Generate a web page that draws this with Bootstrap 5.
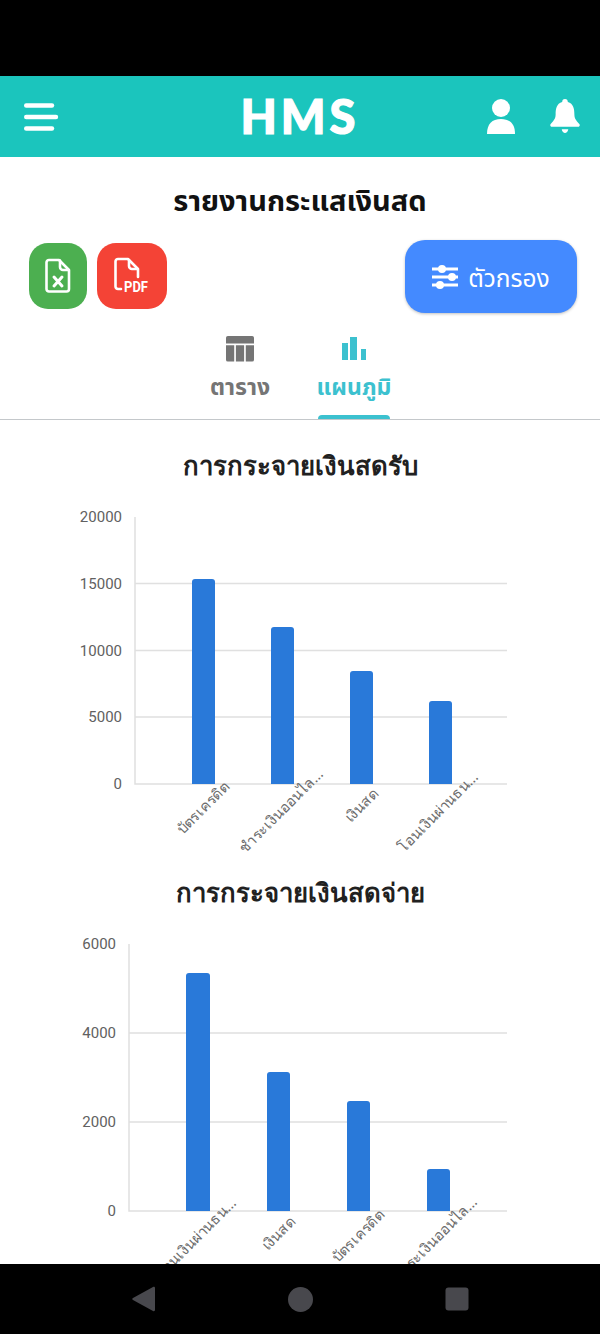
<!DOCTYPE html>
<html lang="th"><head><meta charset="utf-8"><title>HMS</title>
<link href="https://cdn.jsdelivr.net/npm/bootstrap@5.3.0/dist/css/bootstrap.min.css" rel="stylesheet">
<style>
html,body{height:1334px;overflow:hidden}
body{font-family:"Noto Sans","Noto Sans Thai",Roboto,sans-serif;background:#000;width:600px}
.topgap{height:76px;background:#000}
.appbar{height:81px;background:#1bc5bd;padding:0 20px 0 24px}
.logo{font-family:"Lato",sans-serif;font-weight:900;font-size:47px;color:#fff;letter-spacing:4px;line-height:1;-webkit-text-stroke:1.2px #fff;margin-left:53px}
.screen{height:1107px;background:#fff;overflow:hidden}
.pagetitle{font-size:29px;font-weight:700;color:#111;line-height:1;margin:0;padding-top:28px;text-align:center}
.toolbar{padding:0 23px 0 29px;margin-top:29px;height:73px}
.xbtn{width:58px;height:66px;border-radius:19px;background:#4caf50}
.pbtn{width:70px;height:66px;border-radius:19px;background:#f44336}
.fbtn{width:172px;height:73px;border-radius:20px;background:#448aff;color:#fff;font-size:24.5px;box-shadow:0 1px 3px rgba(0,0,0,.25);gap:10px;margin-top:-3px}
.fbtn span{margin-top:3px}
.tabbar{height:91px;border-bottom:1px solid #c4c8cb;margin-top:13px;gap:42px;padding-right:6px}
.tabitem{width:72px;color:#757575;font-size:23px;font-weight:700;position:relative;padding-top:6px;line-height:1}
.tabitem.on{color:#3cc1cf}
.tabitem.on::after{content:"";position:absolute;left:0;right:0;bottom:0;height:4px;background:#3cc1cf;border-radius:4px 4px 0 0}
.tablabel{margin-top:12px;white-space:nowrap}
.chart{display:block}
.chart text{font-family:"Noto Sans",Roboto,sans-serif}
.ctitle{font-size:25.7px;font-weight:700;fill:#212121}
.chart text.ylab{font-family:Roboto,sans-serif;font-size:15px;fill:#616161}
.xlab{font-size:14.5px;fill:#6b6b6b}
.navbot{height:70px;background:#000;padding:0 131px 0 131px}
</style></head><body>
<div class="topgap"></div>
<header class="appbar d-flex align-items-center justify-content-between">
<svg width="36" height="30" viewBox="0 0 36 30" aria-hidden="true"><g stroke="#fff" stroke-width="4.4" stroke-linecap="round"><path d="M2.200 3.500H28"/><path d="M2.200 15H32"/><path d="M2.200 26.500H28"/></g></svg>
<div class="logo">HMS</div>
<div class="d-flex align-items-center" style="gap:35px">
<svg width="28" height="35" viewBox="0 0 28 35" aria-hidden="true"><circle cx="14" cy="9" r="9" fill="#fff"/><path d="M0 35c0-10 5-15 14-15s14 5 14 15z" fill="#fff"/></svg>
<svg width="30" height="35" viewBox="0 0 32 36" preserveAspectRatio="none" aria-hidden="true"><path d="M16 0c2 0 3 1.300 3 3.200C25 5 26 10 26 16c0 5 3 7 5.500 10 .6 1.200 0 2.500-1.500 2.500H2C.5 28.500-.1 27.200.5 26 3 23 6 21 6 16 6 10 7 5 13 3.200 13 1.300 14 0 16 0z" fill="#fff"/><path d="M12.500 31h7c-.5 2.500-2 4-3.500 4s-3-1.500-3.500-4z" fill="#fff"/></svg>
</div>
</header>
<main class="screen">
<h1 class="pagetitle">รายงานกระแสเงินสด</h1>
<div class="toolbar d-flex justify-content-between">
<div class="d-flex" style="gap:10px">
<div class="xbtn d-flex align-items-center justify-content-center">
<svg width="26" height="36" viewBox="0 0 26 36" fill="none" stroke="#fff" stroke-width="2.600" stroke-linejoin="round" stroke-linecap="round" aria-hidden="true"><path d="M4 2h10l10 10v19a2.500 2.500 0 0 1-2.500 2.500H4A2.500 2.500 0 0 1 1.500 31V4.500A2.500 2.500 0 0 1 4 2z"/><path d="M15 2.500V9a3 3 0 0 0 3 3h5.500"/><path d="M9 19l8 9M17 19l-8 9" stroke-width="3"/></svg></div>
<div class="pbtn d-flex align-items-center justify-content-center">
<svg width="36" height="38" viewBox="0 0 36 38" fill="none" aria-hidden="true"><path d="M7 32H4a2.500 2.500 0 0 1-2.500-2.500V4.500A2.500 2.500 0 0 1 4 2h10l10 10v8" stroke="#fff" stroke-width="2.600" stroke-linejoin="round" stroke-linecap="round"/><path d="M15 2.500V9a3 3 0 0 0 3 3h5.500" stroke="#fff" stroke-width="2.600"/><text x="22" y="35" text-anchor="middle" font-family="Roboto,sans-serif" font-weight="700" font-size="14" textLength="24" lengthAdjust="spacingAndGlyphs" fill="#fff">PDF</text></svg></div>
</div>
<div class="fbtn d-flex align-items-center justify-content-center">
<svg width="26" height="24" viewBox="0 0 26 24" aria-hidden="true"><g stroke="#fff" stroke-width="3"><path d="M0 4H26M0 12H26M0 20H26"/></g><circle cx="10" cy="4" r="4" fill="#fff"/><circle cx="20" cy="12" r="4" fill="#fff"/><circle cx="8" cy="20" r="4" fill="#fff"/></svg>
<span>ตัวกรอง</span></div>
</div>
<div class="tabbar d-flex justify-content-center">
<div class="tabitem text-center d-flex flex-column align-items-center">
<svg width="28" height="28" viewBox="0 0 30 28" aria-hidden="true"><path d="M2 0h26a2 2 0 0 1 2 2v6H0V2a2 2 0 0 1 2-2zM0 10h8.800v17.500H2a2 2 0 0 1-2-2zM10.600 10h8.800v17.500h-8.800zM21.200 10H30v15.500a2 2 0 0 1-2 2h-6.800z" fill="#757575"/></svg>
<div class="tablabel">ตาราง</div></div>
<div class="tabitem on text-center d-flex flex-column align-items-center">
<svg width="30" height="28" viewBox="0 0 30 28" aria-hidden="true"><path d="M3 8h6v17H3zM11 2h7v23h-7zM22 14h5v11h-5z" fill="#3cc1cf"/></svg>
<div class="tablabel">แผนภูมิ</div></div>
</div>
<svg class="chart" width="600" height="845" viewBox="0 0 600 845" aria-label="แผนภูมิ">
<g transform="translate(0,-420)">
<text class="ctitle" x="300" y="475" text-anchor="middle">การกระจายเงินสดรับ</text>
<g stroke="#e0e0e0" stroke-width="1.500" fill="none"><path d="M135 517V784H507M135 583.500H507M135 650.500H507M135 717H507"/></g>
<g class="yaxis"><text class="ylab" x="122" y="522" text-anchor="end">20000</text><text class="ylab" x="122" y="589" text-anchor="end">15000</text><text class="ylab" x="122" y="655.500" text-anchor="end">10000</text><text class="ylab" x="122" y="722" text-anchor="end">5000</text><text class="ylab" x="122" y="789" text-anchor="end">0</text></g>
<g fill="#2979d9"><path d="M192 582a3 3 0 0 1 3-3h17a3 3 0 0 1 3 3V784H192z"/><path d="M271 630a3 3 0 0 1 3-3h17a3 3 0 0 1 3 3V784H271z"/><path d="M350 674a3 3 0 0 1 3-3h17a3 3 0 0 1 3 3V784H350z"/><path d="M429 704a3 3 0 0 1 3-3h17a3 3 0 0 1 3 3V784H429z"/></g>
<text class="xlab" transform="translate(230,788) rotate(-45)" text-anchor="end">บัตรเครดิต</text>
<text class="xlab" transform="translate(324,775) rotate(-45)" text-anchor="end">ชำระเงินออนไล...</text>
<text class="xlab" transform="translate(379,795) rotate(-45)" text-anchor="end">เงินสด</text>
<text class="xlab" transform="translate(479,778) rotate(-45)" text-anchor="end">โอนเงินผ่านธน...</text>

<text class="ctitle" x="300" y="902" text-anchor="middle">การกระจายเงินสดจ่าย</text>
<g stroke="#e0e0e0" stroke-width="1.500" fill="none"><path d="M129 944V1211H507M129 1033H507M129 1122H507"/></g>
<g><text class="ylab" x="116" y="949" text-anchor="end">6000</text><text class="ylab" x="116" y="1038" text-anchor="end">4000</text><text class="ylab" x="116" y="1127" text-anchor="end">2000</text><text class="ylab" x="116" y="1216" text-anchor="end">0</text></g>
<g fill="#2979d9"><path d="M186 976a3 3 0 0 1 3-3h18a3 3 0 0 1 3 3V1211H186z"/><path d="M267 1075a3 3 0 0 1 3-3h17a3 3 0 0 1 3 3V1211H267z"/><path d="M347 1104a3 3 0 0 1 3-3h17a3 3 0 0 1 3 3V1211H347z"/><path d="M427 1172a3 3 0 0 1 3-3h17a3 3 0 0 1 3 3V1211H427z"/></g>
<text class="xlab" transform="translate(237,1204) rotate(-45)" text-anchor="end">โอนเงินผ่านธน...</text>
<text class="xlab" transform="translate(296,1223) rotate(-45)" text-anchor="end">เงินสด</text>
<text class="xlab" transform="translate(385,1216) rotate(-45)" text-anchor="end">บัตรเครดิต</text>
<text class="xlab" transform="translate(478,1203) rotate(-45)" text-anchor="end">ชำระเงินออนไล...</text>
</g>
</svg>
</main>
<nav class="navbot d-flex align-items-center justify-content-between">
<svg width="24" height="26" viewBox="0 0 24 26" aria-hidden="true"><path d="M22 1 2 12c-1 .6-1 1.400 0 2l20 11c1 .5 2 0 2-1V2c0-1-1-1.500-2-1z" fill="#48484d"/></svg>
<svg width="25" height="25" viewBox="0 0 25 25" aria-hidden="true"><circle cx="12.500" cy="12.500" r="12.500" fill="#48484d"/></svg>
<svg width="24" height="24" viewBox="0 0 24 24" aria-hidden="true"><rect width="23" height="23" x=".5" y=".5" rx="3" fill="#48484d"/></svg>
</nav>
</body></html>
